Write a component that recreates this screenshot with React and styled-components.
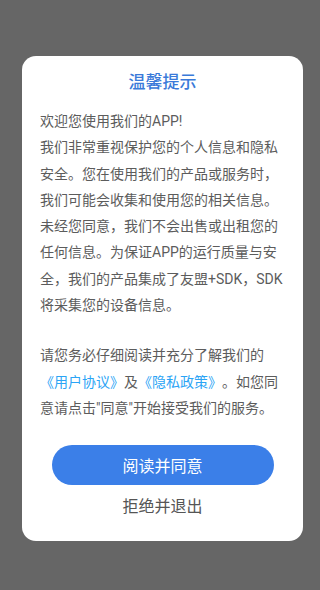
import React from "react";
import styled, { createGlobalStyle } from "styled-components";

const GlobalStyle = createGlobalStyle`
  html, body {
    margin: 0;
    padding: 0;
    background: #666666;
  }
  body {
    font-family: Roboto, "Noto Sans CJK SC", sans-serif;
  }
`;

const Screen = styled.div`
  width: 320px;
  height: 590px;
  background: #666666;
  padding-top: 56px;
  box-sizing: border-box;
`;

const Dialog = styled.div`
  width: 281px;
  margin-left: 22px;
  background: #ffffff;
  border-radius: 14px;
  box-sizing: border-box;
  padding: 14px 18px 22px 18px;
  display: flex;
  flex-direction: column;
`;

const Title = styled.h2`
  margin: 0;
  font-size: 17px;
  line-height: 24px;
  font-weight: 500;
  color: #3a7ad9;
  text-align: center;
`;

const Content = styled.div`
  margin-top: 14px;
  width: 245px;
`;

const Para = styled.p`
  margin: 0 0 ${(p) => p.$gap || 0}px 0;
  font-size: 14px;
  line-height: 26.3px;
  color: #5c5c5c;
  text-spacing-trim: space-all;
`;

const Link = styled.span`
  color: #2ba4f5;
`;

const Actions = styled.div`
  display: flex;
  flex-direction: column;
  align-items: center;
  margin-top: 24px;
`;

const AgreeButton = styled.button`
  width: 222px;
  height: 40px;
  border: none;
  border-radius: 20px;
  background: #3b7fe8;
  color: #ffffff;
  font-family: inherit;
  font-size: 16px;
  cursor: pointer;
`;

const RejectButton = styled.button`
  margin-top: 10px;
  border: none;
  background: none;
  padding: 0;
  height: 24px;
  line-height: 24px;
  color: #555555;
  font-family: inherit;
  font-size: 16px;
  cursor: pointer;
`;

export default function App() {
  return (
    <Screen>
      <GlobalStyle />
      <Dialog>
        <Title>温馨提示</Title>
        <Content>
          <Para $gap={24}>
            欢迎您使用我们的APP!
            <br />
            我们非常重视保护您的个人信息和隐私安全。您在使用我们的产品或服务时，我们可能会收集和使用您的相关信息。未经您同意，我们不会出售或出租您的任何信息。为保证APP的运行质量与安全，我们的产品集成了友盟+SDK，SDK将采集您的设备信息。
          </Para>
          <Para>
            请您务必仔细阅读并充分了解我们的<Link>《用户协议》</Link>及<Link>《隐私政策》</Link>。如您同意请点击"同意"开始接受我们的服务。
          </Para>
        </Content>
        <Actions>
          <AgreeButton>阅读并同意</AgreeButton>
          <RejectButton>拒绝并退出</RejectButton>
        </Actions>
      </Dialog>
    </Screen>
  );
}
